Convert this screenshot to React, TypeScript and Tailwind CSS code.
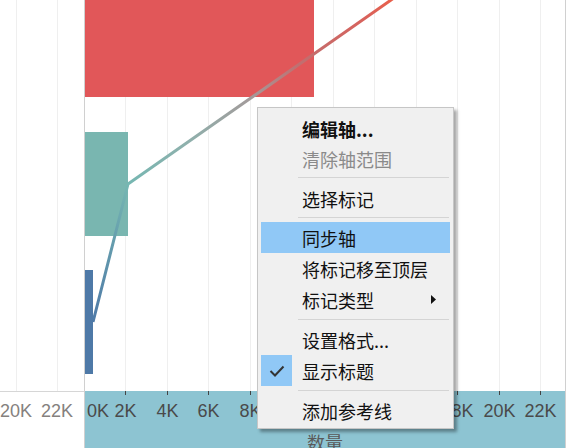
import React from "react";

const ticks = [0, 1, 2, 3, 4, 5, 6, 7, 8, 9, 10, 11];
const tickX = (k: number) => Math.round(41.5 * k - 1.5);

type Item =
  | { kind: "item"; label: string; h: string; bold?: boolean; muted?: boolean; active?: boolean; checked?: boolean; submenu?: boolean }
  | { kind: "sep"; cls: string };

const menu: Item[] = [
  { kind: "item", label: "编辑轴...", h: "h-[30px]", bold: true },
  { kind: "item", label: "清除轴范围", h: "h-[30px]", muted: true },
  { kind: "sep", cls: "mt-[3px] mb-[6px]" },
  { kind: "item", label: "选择标记", h: "h-[30px]" },
  { kind: "sep", cls: "mt-[3px] mb-[4px]" },
  { kind: "item", label: "同步轴", h: "h-[31px]", active: true },
  { kind: "item", label: "将标记移至顶层", h: "h-[31px]" },
  { kind: "item", label: "标记类型", h: "h-[31px]", submenu: true },
  { kind: "sep", cls: "mt-[4px] mb-[5px]" },
  { kind: "item", label: "设置格式...", h: "h-[30px]" },
  { kind: "item", label: "显示标题", h: "h-[31px]", checked: true },
  { kind: "sep", cls: "mt-[4px] mb-[5px]" },
  { kind: "item", label: "添加参考线", h: "h-[30px]" },
];

function ContextMenu() {
  return (
    <div className="absolute left-[257px] top-[107px] w-[197px] h-[322px] bg-[#f0f0f0] border border-[#c6c6c6] shadow-[3px_3px_3px_rgba(0,0,0,0.35)] pt-[6px] font-['Noto_Sans_CJK_SC',sans-serif] text-[18px] leading-none">
      {menu.map((it, i) =>
        it.kind === "sep" ? (
          <div key={i} className={`h-px ml-[40px] mr-[4px] bg-[#d4d4d4] ${it.cls}`} />
        ) : (
          <div
            key={i}
            className={`relative flex items-center mx-[3px] pl-[41px] ${it.h} ${it.active ? "bg-[#90c8f6]" : ""} ${
              it.bold ? "font-bold text-[#111]" : it.muted ? "text-[#8a8a8a]" : "text-[#111]"
            }`}
          >
            {it.checked && (
              <div className="absolute left-0 top-0 w-[31px] h-full bg-[#90c8f6] flex items-center justify-center">
                <svg width="16" height="12" viewBox="0 0 16 12">
                  <path d="M1.5 6 L6 10.5 L14.5 1.5" fill="none" stroke="#333" strokeWidth="2" />
                </svg>
              </div>
            )}
            <span>{it.label}</span>
            {it.submenu && (
              <svg className="absolute right-[14px]" width="5" height="9" viewBox="0 0 5 9">
                <path d="M0 0 L5 4.5 L0 9 Z" fill="#111" />
              </svg>
            )}
          </div>
        )
      )}
    </div>
  );
}

function Plot() {
  return (
    <svg width="480" height="391" className="block">
      <defs>
        <linearGradient id="ln" gradientUnits="userSpaceOnUse" x1="8" y1="322" x2="306" y2="0">
          <stop offset="0" stopColor="#4e79a7" />
          <stop offset="0.285" stopColor="#76b7b2" />
          <stop offset="0.45" stopColor="#8fb0ac" />
          <stop offset="0.62" stopColor="#a39a9a" />
          <stop offset="0.75" stopColor="#c06f70" />
          <stop offset="0.93" stopColor="#d8625c" />
          <stop offset="1" stopColor="#e8604c" />
        </linearGradient>
      </defs>
      {ticks.slice(1).map((k) => (
        <rect key={k} x={tickX(k)} y={0} width={1} height={391} fill="#efefef" />
      ))}
      <rect x={0} y={0} width={229} height={97} fill="#e15759" />
      <rect x={0} y={132} width={43} height={104} fill="#79b6b0" />
      <rect x={0} y={270} width={8} height={104} fill="#4e79a7" />
      <polyline
        points="8,322 43,184 306,0 330,-17"
        fill="none"
        stroke="url(#ln)"
        strokeWidth="3"
        strokeLinejoin="round"
      />
    </svg>
  );
}

export default function App() {
  return (
    <div className="relative w-[572px] h-[448px] bg-white overflow-hidden font-['Liberation_Sans',sans-serif]">
      <div className="flex h-full">
        {/* left pane (second axis) */}
        <div className="w-[84px] flex flex-col">
          <div className="relative h-[391px]">
            <div className="absolute left-[16px] top-0 h-full w-px bg-[#efefef]" />
            <div className="absolute left-[57px] top-0 h-full w-px bg-[#efefef]" />
          </div>
          <div className="relative flex-1 border-t border-[#d6d6d6]">
            <span className="absolute left-[16px] top-[10px] -translate-x-1/2 text-[18px] leading-[18px] text-[#85817e]">20K</span>
            <span className="absolute left-[57px] top-[10px] -translate-x-1/2 text-[18px] leading-[18px] text-[#85817e]">22K</span>
          </div>
        </div>

        {/* plot pane */}
        <div className="w-[482px] flex flex-col border-l border-r border-[#d0d0d0]">
          <Plot />
          <div className="relative flex-1 bg-[#8dc4d2]">
            {ticks.slice(1).map((k) => (
              <div key={k} className="absolute top-0 w-px h-[4px] bg-[#444]" style={{ left: tickX(k) }} />
            ))}
            {ticks.map((k) => (
              <span
                key={k}
                className={`absolute top-[11px] text-[18px] leading-[18px] text-[#4a4a4a] whitespace-nowrap ${k === 0 ? "" : "-translate-x-1/2"}`}
                style={{ left: k === 0 ? 2 : tickX(k) + 0.5 }}
              >
                {k * 2}K
              </span>
            ))}
            <div className="absolute left-0 right-0 top-[42px] text-center font-['Noto_Sans_CJK_SC',sans-serif] text-[18px] leading-none text-[#5a5a5a]">
              数量
            </div>
          </div>
        </div>
        <div className="flex-1" />
      </div>
      <ContextMenu />
    </div>
  );
}
